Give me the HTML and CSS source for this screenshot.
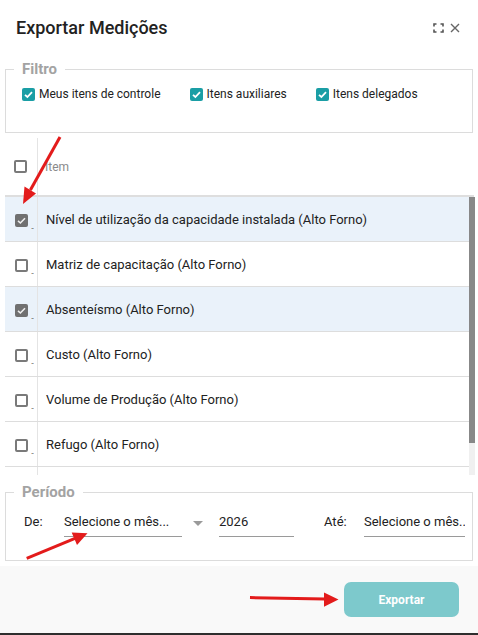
FILE: index.html
```html
<!DOCTYPE html>
<html lang="pt-BR">
<head>
<meta charset="utf-8">
<title>Exportar Medições</title>
<link rel="stylesheet" href="styles.css">
</head>
<body>
<div class="dialog">
  <header class="head">
    <h1 class="title">Exportar Medições</h1>
    <div class="head-icons">
      <svg class="ico" width="11" height="10" viewBox="0 0 11 10"><path d="M1 3.5V1H3.5M7.5 1H10V3.5M10 6.5V9H7.5M3.5 9H1V6.5" fill="none" stroke="#555" stroke-width="1.6"/></svg>
      <svg class="ico" width="10" height="10" viewBox="0 0 10 10"><path d="M1 1L9 9M9 1L1 9" fill="none" stroke="#666" stroke-width="1.4"/></svg>
    </div>
  </header>

  <div class="content">
    <fieldset class="box filter">
      <legend class="legend">Filtro</legend>
      <div class="checks">
        <label class="chk"><span class="cb cb-teal"><svg width="13" height="13" viewBox="0 0 13 13"><path d="M3 6.8L5.4 9L10 4.2" fill="none" stroke="#fff" stroke-width="1.8"/></svg></span>Meus itens de controle</label>
        <label class="chk"><span class="cb cb-teal"><svg width="13" height="13" viewBox="0 0 13 13"><path d="M3 6.8L5.4 9L10 4.2" fill="none" stroke="#fff" stroke-width="1.8"/></svg></span>Itens auxiliares</label>
        <label class="chk"><span class="cb cb-teal"><svg width="13" height="13" viewBox="0 0 13 13"><path d="M3 6.8L5.4 9L10 4.2" fill="none" stroke="#fff" stroke-width="1.8"/></svg></span>Itens delegados</label>
      </div>
    </fieldset>

    <div class="grid">
      <div class="grid-head">
        <div class="c-sel"><span class="cb cb-empty"></span></div>
        <div class="c-name h-name">Item</div>
      </div>
      <div class="grid-body">
        <div class="rows">
          <div class="row sel">
            <div class="c-sel"><span class="cb cb-gray"><svg width="13" height="13" viewBox="0 0 13 13"><path d="M3 6.8L5.4 9L10 4.2" fill="none" stroke="#eee" stroke-width="1.6"/></svg></span><span class="dots">..</span></div>
            <div class="c-name">Nível de utilização da capacidade instalada (Alto Forno)</div>
          </div>
          <div class="row">
            <div class="c-sel"><span class="cb cb-empty"></span><span class="dots">..</span></div>
            <div class="c-name">Matriz de capacitação (Alto Forno)</div>
          </div>
          <div class="row sel">
            <div class="c-sel"><span class="cb cb-gray"><svg width="13" height="13" viewBox="0 0 13 13"><path d="M3 6.8L5.4 9L10 4.2" fill="none" stroke="#eee" stroke-width="1.6"/></svg></span><span class="dots">..</span></div>
            <div class="c-name">Absenteísmo (Alto Forno)</div>
          </div>
          <div class="row">
            <div class="c-sel"><span class="cb cb-empty"></span><span class="dots">..</span></div>
            <div class="c-name">Custo (Alto Forno)</div>
          </div>
          <div class="row">
            <div class="c-sel"><span class="cb cb-empty"></span><span class="dots">..</span></div>
            <div class="c-name">Volume de Produção (Alto Forno)</div>
          </div>
          <div class="row">
            <div class="c-sel"><span class="cb cb-empty"></span><span class="dots">..</span></div>
            <div class="c-name">Refugo (Alto Forno)</div>
          </div>
          <div class="row row-partial">
            <div class="c-sel"></div>
            <div class="c-name"></div>
          </div>
        </div>
        <div class="sbar"><div class="thumb"></div></div>
      </div>
    </div>

    <fieldset class="box period">
      <legend class="legend">Período</legend>
      <div class="period-row">
        <span class="lbl lbl-de">De:</span>
        <span class="inp inp-m1">Selecione o mês...</span>
        <span class="caret"></span>
        <span class="inp inp-y">2026</span>
        <span class="lbl lbl-ate">Até:</span>
        <span class="inp inp-m2">Selecione o mês..</span>
      </div>
    </fieldset>
  </div>

  <footer class="foot">
    <button class="btn">Exportar</button>
  </footer>
</div>

<svg class="annot" width="478" height="635" viewBox="0 0 478 635">
  <g fill="#e31b1b" stroke="#e31b1b">
    <line x1="60" y1="137" x2="30.4" y2="190" stroke-width="3"/>
    <polygon points="23,204 36,193.5 24.5,186.5" stroke="none"/>
    <line x1="26.7" y1="558.3" x2="75" y2="538.4" stroke-width="3"/>
    <polygon points="87.5,533.3 77,545 71.7,532.5" stroke="none"/>
    <line x1="250" y1="597.6" x2="325" y2="599" stroke-width="3"/>
    <polygon points="338.5,599.6 324,592.5 324,606.8" stroke="none"/>
  </g>
</svg>
</body>
</html>
```

FILE: styles.css
```css
* { box-sizing: border-box; }

html, body {
  margin: 0;
  padding: 0;
  background: #ffffff;
}

body {
  font-family: Roboto, "Liberation Sans", Arial, sans-serif;
  color: #212121;
  position: relative;
  width: 478px;
  height: 635px;
  overflow: hidden;
}

.dialog {
  width: 478px;
  height: 635px;
  display: flex;
  flex-direction: column;
}

.head {
  height: 54px;
  flex: 0 0 54px;
  display: flex;
  align-items: center;
  justify-content: space-between;
  padding: 0 18px 0 16px;
}

.title {
  margin: 0;
  font-size: 18px;
  font-weight: 500;
  color: #222;
  line-height: 22px;
  padding-top: 1px;
}

.head-icons {
  display: flex;
  align-items: center;
  gap: 6px;
  padding-top: 1px;
}

.ico { display: block; }

.content {
  padding: 0 5px;
}

.box {
  margin: 0;
  padding: 0;
  border: 1px solid #dcdcdc;
  min-width: 0;
}

.legend {
  margin-left: 8px;
  padding: 0 8px;
  font-size: 15px;
  line-height: 18px;
  font-weight: 700;
  color: #a3a3a3;
}

.filter {
  margin-top: 6px;
}

.checks {
  display: flex;
  align-items: center;
  gap: 29px;
  padding: 8px 0 30px 16px;
}

.chk {
  display: flex;
  align-items: center;
  gap: 4px;
  font-size: 12px;
  line-height: 16px;
  color: #222;
}

.cb {
  width: 13px;
  height: 13px;
  border-radius: 2px;
  display: inline-block;
  flex: 0 0 13px;
}

.cb svg { display: block; }

.cb-teal { background: #1a9ea5; }

.cb-gray { background: #707070; }

.cb-empty {
  border: 2px solid #7a7a7a;
  background: #fff;
}

/* grid */
.grid {
  margin-top: 5px;
  width: 470px;
}

.grid-head {
  display: flex;
  height: 59px;
  border-bottom: 2px solid #dedede;
  width: 469px;
}

.c-sel {
  flex: 0 0 33px;
  border-right: 1px solid #e4e4e4;
  display: flex;
  align-items: center;
  padding-left: 10px;
  position: relative;
}

.grid-head .c-sel { padding-left: 9px; }

.c-name {
  flex: 1;
  display: flex;
  align-items: center;
  padding-left: 8px;
  font-size: 13px;
  color: #222;
  white-space: nowrap;
}

.h-name {
  font-size: 12px;
  color: #8a8a8a;
  padding-left: 7px;
}

.grid-body {
  height: 278px;
  display: flex;
}

.rows {
  flex: 1;
  overflow: hidden;
}

.sbar {
  flex: 0 0 6px;
  background: #f0f0f0;
}

.thumb {
  height: 246px;
  background: #888888;
}

.row {
  display: flex;
  height: 45px;
  border-bottom: 1px solid #dddddd;
}

.row .c-sel { padding-top: 2px; }

.row.sel { background: #eaf2fa; }

.dots {
  position: absolute;
  left: 26px;
  top: 26px;
  font-size: 8px;
  line-height: 8px;
  color: #333;
  letter-spacing: -1px;
}

/* period */
.period {
  margin-top: 8px;
}

.period-row {
  display: flex;
  align-items: flex-start;
  padding: 12px 0 23px 18px;
  font-size: 13px;
  line-height: 17px;
  color: #222;
}

.lbl {
  flex: 0 0 40px;
  height: 24px;
}

.lbl-ate { margin-left: 30px; }

.inp {
  height: 24px;
  border-bottom: 1px solid #9a9a9a;
  white-space: nowrap;
  overflow: hidden;
}

.inp-m1 { flex: 0 0 118px; }
.inp-y { flex: 0 0 75px; margin-left: 16px; }
.inp-m2 { flex: 0 0 101px; }

.caret {
  margin-left: 11px;
  margin-top: 8px;
  width: 0;
  height: 0;
  border-left: 5px solid transparent;
  border-right: 5px solid transparent;
  border-top: 5px solid #9a9a9a;
}

/* footer */
.foot {
  margin-top: auto;
  height: 69px;
  flex: 0 0 69px;
  background: #f9f9f9;
  border-bottom: 2px solid #2e2e2e;
  display: flex;
  align-items: center;
  justify-content: flex-end;
  padding-right: 19px;
}

.btn {
  width: 115px;
  height: 35px;
  border: 0;
  border-radius: 7px;
  background: #7dc9cc;
  color: #fff;
  font-family: Roboto, "Liberation Sans", Arial, sans-serif;
  font-size: 12px;
  font-weight: 700;
  padding: 0;
}

.annot {
  position: absolute;
  left: 0;
  top: 0;
  pointer-events: none;
}
```
